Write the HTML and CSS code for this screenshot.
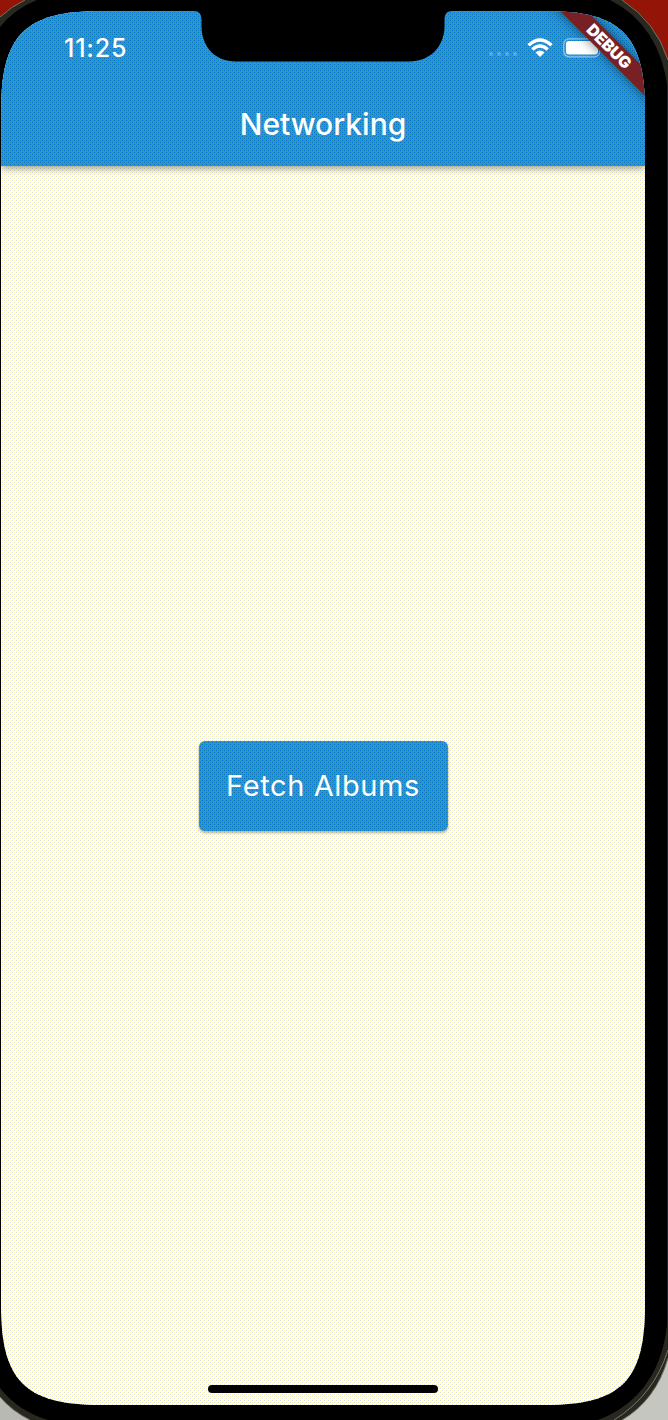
FILE: index.html
```html
<!DOCTYPE html>
<html lang="en">
<head>
<meta charset="utf-8">
<title>Networking</title>
<link rel="stylesheet" href="styles.css">
</head>
<body>
<div class="device">
  <svg class="bezel" width="668" height="1420" viewBox="0 0 668 1420" aria-hidden="true">
    <rect width="668" height="1420" fill="#000"/>
    <path d="M0 0H25Q12 6 0 17Z" fill="#941408"/>
    <path d="M0 17Q12 6 25 0H37Q14 9 0 27Z" fill="#282820"/>
    <path d="M0 17Q12 6 25 0" fill="none" stroke="#777768"/>
    <path d="M622 0H668V60Q656 22 622 0Z" fill="#941408"/>
    <path d="M610 0H622Q656 22 668 60V90Q660 25 610 0Z" fill="#282820"/>
    <path d="M622 0Q656 22 668 60" fill="none" stroke="#777768"/>
    <path d="M667.500 85V1330" stroke="#202033"/>
    <path d="M0 1397Q12 1411 30 1420H0Z" fill="#b9b9b4"/>
    <path d="M0 1388Q18 1411 48 1420H30Q12 1411 0 1397Z" fill="#282820"/>
    <path d="M0 1397Q12 1411 30 1420" fill="none" stroke="#777768"/>
    <path d="M668 1358Q656 1400 622 1420H668Z" fill="#c6c6c0"/>
    <path d="M668 1315Q663 1395 598 1420H622Q656 1400 668 1358Z" fill="#282820"/>
    <path d="M668 1358Q656 1400 622 1420M668 1350Q654 1395 614 1420" fill="none" stroke="#777768"/>
  </svg>
  <main class="screen">
    <header class="app-bar">
      <div class="status-bar">
        <span class="time">11:25</span>
        <div class="indicators">
          <svg width="30" height="6" viewBox="0 0 30 6"><g fill="#55aaf0"><circle cx="3" cy="3" r="2"/><circle cx="11" cy="3" r="2"/><circle cx="19" cy="3" r="2"/><circle cx="27" cy="3" r="2"/></g></svg>
          <svg class="wifi" width="26" height="20" viewBox="0 0 26 20"><g fill="none" stroke="#fff" stroke-width="3.300"><path d="M1.500 7.300Q13-3.300 24.500 7.300"/><path d="M5.300 11.500Q13 4.500 20.700 11.500"/></g><path d="M8.500 14.500Q13 10.700 17.500 14.500L13 19Z" fill="#fff"/></svg>
          <svg width="40" height="20" viewBox="0 0 40 20"><rect x=".8" y=".8" width="36" height="18" rx="5.500" fill="none" stroke="#8bc8f8" stroke-width="1.300"/><rect x="3" y="3" width="32" height="13.500" rx="3" fill="#fff"/></svg>
        </div>
      </div>
      <h1 class="title">Networking</h1>
    </header>
    <section class="content"><button class="fetch">Fetch Albums</button></section>
    <div class="home-indicator"></div>
    <svg class="notch" width="258" height="51" viewBox="0 0 258 51"><path d="M0 0C5 0 7.500 3 7.500 9V16C8 36 21 50.500 42 50.500H215C236 50.500 250 36 250.500 16V9C250.500 3 253 0 258 0Z"/></svg>
    <div class="debug"><span class="debug-band">DEBUG</span></div>
  </main>
</div>
</body>
</html>
```
FILE: styles.css
```css
* { box-sizing: border-box; }

body {
  margin: 0;
  background: #000;
  font-family: Inter, "Liberation Sans", sans-serif;
}

.device {
  position: relative;
  width: 668px;
  height: 1420px;
  padding: 11px 23px 15px 1px;
  overflow: hidden;
}

.bezel {
  position: absolute;
  top: 0;
  left: 0;
}

.screen {
  position: relative;
  display: flex;
  flex-direction: column;
  width: 644px;
  height: 1394px;
  background: #fff url("data:image/svg+xml,%3Csvg xmlns='http://www.w3.org/2000/svg' width='4' height='4' shape-rendering='crispEdges'%3E%3Cpath fill='%23ffffaa' d='M1 1h1v1H1zM3 3h1v1H3z'/%3E%3Cpath fill='%23dbdbff' d='M3 1h1v1H3zM1 3h1v1H1z'/%3E%3C/svg%3E");
  clip-path: path("M0 100C0 24 24 0 100 0H544C620 0 644 24 644 100V1294C644 1370 620 1394 544 1394H100C24 1394 0 1370 0 1294Z");
}

.app-bar, .fetch {
  color: #fff;
  background: #2492ff url("data:image/svg+xml,%3Csvg xmlns='http://www.w3.org/2000/svg' width='4' height='4' shape-rendering='crispEdges'%3E%3Cpath fill='%23006ddb' d='M1 1h1v1H1zM3 3h1v1H3z'/%3E%3Cpath fill='%232492aa' d='M3 1h1v1H3zM1 3h1v1H1z'/%3E%3C/svg%3E");
}

.app-bar {
  position: relative;
  height: 155px;
  box-shadow: 0 2px 8px rgba(0, 0, 0, .42);
}

.status-bar {
  display: flex;
  justify-content: space-between;
  height: 72px;
  padding: 0 42px 0 63px;
}

.time {
  padding-top: 22px;
  font-size: 25px;
  line-height: 30px;
  font-weight: 500;
  letter-spacing: .8px;
}

.indicators {
  display: flex;
  align-items: flex-start;
  gap: 9px;
  padding-top: 27px;
}

.indicators svg:first-child { margin-top: 13px; }

.wifi { margin-right: 1px; }

.title {
  margin: 0;
  padding-top: 22px;
  text-align: center;
  font-size: 30px;
  line-height: 38px;
  font-weight: 500;
  letter-spacing: 0;
}

.content {
  flex: 1;
  display: flex;
  align-items: center;
  justify-content: center;
}

.fetch {
  width: 249px;
  height: 90px;
  padding: 0;
  border: 0;
  border-radius: 6px;
  box-shadow: 0 2px 3px rgba(0, 0, 0, .3);
  font: 400 29px/90px Inter, "Liberation Sans", sans-serif;
  letter-spacing: .6px;
}

.home-indicator {
  position: absolute;
  bottom: 12px;
  left: 207px;
  width: 230px;
  height: 8px;
  border-radius: 4px;
  background: #000;
}

.notch {
  position: absolute;
  top: 0;
  left: 193px;
}

/* Diagonal ribbon over the top right corner */
.debug {
  position: absolute;
  top: 0;
  right: 0;
  width: 120px;
  height: 120px;
  overflow: hidden;
}

.debug-band {
  position: absolute;
  top: 26px;
  left: 4px;
  width: 160px;
  height: 19px;
  color: #fff;
  background: #792024;
  box-shadow: 0 0 12px rgba(0, 0, 0, .5);
  font-size: 16px;
  line-height: 19px;
  font-weight: 900;
  text-align: center;
  transform: rotate(45deg);
}
```
